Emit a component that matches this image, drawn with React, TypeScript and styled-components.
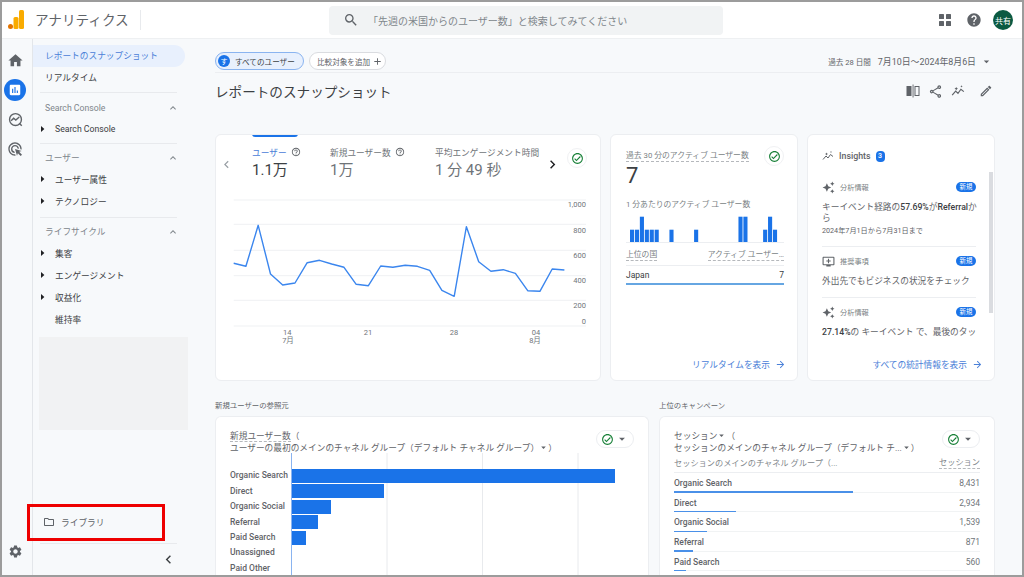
import React from 'react';
import styled, { createGlobalStyle } from 'styled-components';
import {
  MdAdsClick,
  MdArrowDropDown,
  MdArrowForward,
  MdAssessment,
  MdAutoAwesome,
  MdChevronLeft,
  MdChevronRight,
  MdExpandLess,
  MdHelp,
  MdHelpOutline,
  MdHome,
  MdOutlineAddToQueue,
  MdOutlineCheckCircle,
  MdOutlineEdit,
  MdOutlineFolder,
  MdOutlineShare,
  MdAdd,
  MdSearch,
  MdSettings,
} from 'react-icons/md';

const FONT = '"Roboto", "Noto Sans CJK JP", sans-serif';
const BLUE = '#1a73e8';

const GlobalStyle = createGlobalStyle`
  html, body { margin: 0; padding: 0; background: #fff; }
  body { font-family: ${FONT}; color: #3c4043; }
  * { box-sizing: border-box; }
`;

const Frame = styled.div`
  width: 1024px;
  height: 577px;
  border: 2px solid #9c9c9c;
  overflow: hidden;
  position: relative;
  display: flex;
  flex-direction: column;
  background: #f7f9fb;
`;

const Header = styled.header`
  height: 37px;
  flex: none;
  background: #fff;
  display: flex;
  align-items: center;
  border-bottom: 1px solid #eef0f2;
`;

const Logo = styled.svg`
  width: 16px;
  height: 20px;
  margin-left: 6px;
  flex: none;
`;

const ProductName = styled.div`
  margin-left: 11px;
  width: 106px;
  height: 20px;
  line-height: 20px;
  font-size: 13.6px;
  color: #5f6368;
  border-right: 1px solid #e8eaed;
  flex: none;
`;

const SearchBox = styled.div`
  margin-left: 188px;
  width: 394px;
  height: 29px;
  border-radius: 4px;
  background: #f1f3f4;
  display: flex;
  align-items: center;
  padding-left: 14px;
  gap: 9px;
  font-size: 10px;
  color: #80868b;
  flex: none;
`;

const HeaderIcons = styled.div`
  margin-left: auto;
  display: flex;
  align-items: center;
  padding-right: 9px;
  color: #5f6368;
  gap: 11px;
`;

const AppsIcon = styled.svg`
  width: 14px;
  height: 14px;
  margin-right: 3px;
`;

const Avatar = styled.div`
  width: 20px;
  height: 20px;
  border-radius: 50%;
  background: #0b5a42;
  color: #fff;
  font-size: 8px;
  display: flex;
  align-items: center;
  justify-content: center;
`;

const Body = styled.div`
  flex: 1;
  min-height: 0;
  display: flex;
`;

const Rail = styled.nav`
  width: 31px;
  flex: none;
  border-right: 1px solid #e3e6ea;
  display: flex;
  flex-direction: column;
  align-items: center;
  padding: 10px 4px 0 0;
  color: #5f6368;
`;

const RailButton = styled.div<{ $active?: boolean }>`
  width: 22px;
  height: 22px;
  margin-bottom: 7.5px;
  border-radius: 50%;
  flex: none;
  display: flex;
  align-items: center;
  justify-content: center;
  background: ${({ $active }) => ($active ? BLUE : 'transparent')};
  color: ${({ $active }) => ($active ? '#fff' : '#5f6368')};
`;

const RailBottom = styled.div`
  margin-top: auto;
  margin-bottom: 16px;
  color: #5f6368;
  display: flex;
`;

const Sidebar = styled.aside`
  width: 157px;
  flex: none;
  display: flex;
  flex-direction: column;
  padding-top: 6px;
`;

const NavPill = styled.div<{ $active?: boolean }>`
  width: 152px;
  height: 22px;
  line-height: 22px;
  padding-left: 12px;
  border-radius: 0 11px 11px 0;
  font-size: 8.7px;
  flex: none;
  color: ${({ $active }) => ($active ? '#4a80d8' : '#3c4043')};
  background: ${({ $active }) => ($active ? '#e8f0fd' : 'transparent')};
`;

const NavPlain = styled(NavPill)`
  margin: 1px 0 3px;
  height: 21px;
  line-height: 21px;
`;

const NavGroup = styled.div`
  margin: 0 13px 0 7px;
  padding: 3px 0 5px;
  border-top: 1px solid #e8eaed;
  flex: none;
`;

const FirstNavGroup = styled(NavGroup)`
  padding: 4px 0 3px;
`;

const NavGroupTitle = styled.div`
  height: 21px;
  padding-left: 5px;
  display: flex;
  align-items: center;
  justify-content: space-between;
  font-size: 8.7px;
  color: #80868b;
  margin-right: -2px;
`;

const NavItem = styled.div`
  height: 22px;
  display: flex;
  align-items: center;
  font-size: 8.7px;
  color: #3c4043;
`;

const Caret = styled.span<{ $hidden?: boolean }>`
  width: 15px;
  flex: none;
  display: flex;
  margin-left: -1px;
  margin-right: 1px;
  color: #202124;
  visibility: ${({ $hidden }) => ($hidden ? 'hidden' : 'visible')};
`;

const Placeholder = styled.div`
  margin: 2px 2px 0 6px;
  height: 93px;
  background: #f1f2f3;
  flex: none;
`;

const LibraryRow = styled.div`
  margin-top: auto;
  height: 22px;
  padding-left: 10px;
  display: flex;
  align-items: center;
  gap: 6px;
  font-size: 8.7px;
  color: #5f6368;
`;

const CollapseRow = styled.div`
  margin: 10px 13px 0 7px;
  height: 32px;
  border-top: 1px solid #e8eaed;
  display: flex;
  justify-content: flex-end;
  align-items: center;
  color: #3c4043;
`;

const RedBox = styled.div`
  position: absolute;
  left: 25px;
  top: 502px;
  width: 138px;
  height: 37px;
  border: 3px solid #ee0000;
`;

const Main = styled.main`
  flex: 1;
  min-width: 0;
  padding: 0 27px 0 25px;
  overflow: hidden;
`;

const Toolbar = styled.div`
  height: 34px;
  margin-right: -5px;
  padding: 13px 7px 0 0;
  border-bottom: 1px solid #eceef1;
  display: flex;
  align-items: flex-start;
  gap: 5px;
`;

const SegmentChip = styled.div`
  height: 18px;
  width: 89px;
  border-radius: 9px;
  border: 1px solid #8ab4f0;
  background: #e8f0fd;
  display: flex;
  align-items: center;
  padding-left: 2px;
  gap: 5px;
  font-size: 7.6px;
  color: #3c4043;
`;

const ChipBadge = styled.span`
  width: 12px;
  height: 12px;
  border-radius: 50%;
  background: ${BLUE};
  color: #fff;
  font-size: 7px;
  display: flex;
  align-items: center;
  justify-content: center;
`;

const CompareChip = styled.div`
  height: 18px;
  width: 77px;
  border-radius: 9px;
  border: 1px solid #dadce0;
  background: #fff;
  display: flex;
  align-items: center;
  padding-left: 7px;
  gap: 2px;
  font-size: 7.6px;
  color: #5f6368;
`;

const DateRange = styled.div`
  margin-left: auto;
  height: 18px;
  display: flex;
  align-items: center;
  font-size: 8.9px;
  color: #5f6368;
`;

const DateHint = styled.span`
  font-size: 7.6px;
  margin-right: 7px;
`;

const DateCaret = styled.span`
  display: flex;
  margin-left: 4px;
`;

const TitleRow = styled.div`
  height: 36px;
  margin-bottom: 25px;
  display: flex;
  align-items: center;
  justify-content: space-between;
`;

const Title = styled.h1`
  margin: 0;
  font-size: 13.6px;
  font-weight: 400;
  color: #3c4043;
`;

const Actions = styled.div`
  display: flex;
  align-items: center;
  gap: 8px;
  margin-right: 2px;
  color: #5f6368;
`;

const EditAction = styled.span`
  display: flex;
  margin-left: 6px;
`;

const TopCards = styled.div`
  display: flex;
  gap: 9px;
  height: 247px;
`;

const Card = styled.section<{ $width: number }>`
  width: ${({ $width }) => $width}px;
  flex: none;
  background: #fff;
  border: 1px solid #eceef1;
  border-radius: 6px;
  display: flex;
  flex-direction: column;
  position: relative;
  overflow: hidden;
`;

const MetricHead = styled.div`
  height: 60px;
  flex: none;
  display: flex;
  align-items: center;
  margin-top: -1px;
`;

const SideChevron = styled.span<{ $dark?: boolean }>`
  width: 20px;
  flex: none;
  display: flex;
  justify-content: center;
  color: ${({ $dark }) => ($dark ? '#202124' : '#9aa0a6')};
`;

const MetricTab = styled.div<{ $width: number; $active?: boolean }>`
  width: ${({ $width }) => $width}px;
  flex: none;
  align-self: stretch;
  padding-top: 12px;
  position: relative;
  margin-left: ${({ $active }) => ($active ? '16px' : '0')};
  &::before {
    content: '';
    display: ${({ $active }) => ($active ? 'block' : 'none')};
    position: absolute;
    left: 0;
    top: 0;
    width: 46px;
    height: 3px;
    border-radius: 0 0 3px 3px;
    background: ${BLUE};
  }
`;

const MetricLabel = styled.div<{ $active?: boolean }>`
  height: 12px;
  display: flex;
  align-items: center;
  gap: 4px;
  font-size: 8.7px;
  white-space: nowrap;
  color: ${({ $active }) => ($active ? '#4a80d8' : '#6f7478')};
`;

const MetricValue = styled.div`
  margin-top: 1px;
  line-height: 22px;
  font-size: 15px;
  color: #3c4043;
`;

const MutedValue = styled(MetricValue)`
  color: #6f7478;
`;

const CheckDot = styled.span`
  width: 20px;
  height: 20px;
  flex: none;
  border-radius: 50%;
  background: #fff;
  border: 1px solid #f0f1f3;
  display: flex;
  align-items: center;
  justify-content: center;
  color: #188038;
`;

const CheckSlot = styled.div`
  align-self: flex-start;
  margin: 14px 0 0 5px;
`;

const LineChart = styled.svg`
  display: block;
  width: 385px;
  height: 160px;
  font-family: ${FONT};
`;

const RealtimeBody = styled.div`
  flex: 1;
  padding: 15px 13px 0 15px;
`;

const DashedRow = styled.div`
  height: 12px;
  display: flex;
  justify-content: space-between;
  align-items: center;
`;

const Dashed = styled.span`
  font-size: 7.8px;
  line-height: 11px;
  color: #7a7f84;
  border-bottom: 1px dashed #b5b8bc;
  white-space: nowrap;
`;

const BigNumber = styled.div`
  margin-top: 2px;
  line-height: 24px;
  font-size: 22px;
  color: #3c4043;
`;

const SubLabel = styled.div`
  margin-top: 11px;
  line-height: 12px;
  font-size: 7.8px;
  color: #7a7f84;
  white-space: nowrap;
`;

const MiniBars = styled.svg`
  display: block;
  margin-top: 1px;
  width: 158px;
  height: 32px;
`;

const CountryHead = styled(DashedRow)`
  margin-top: 5px;
`;

const CountryRow = styled.div`
  margin-top: 4px;
  padding-top: 3px;
  border-top: 1px solid #eceef1;
  height: 15px;
  display: flex;
  justify-content: space-between;
  align-items: center;
  font-size: 8.5px;
  color: #3c4043;
`;

const CountryBar = styled.div`
  margin-top: 3px;
  height: 1.5px;
  background: #66a6e2;
`;

const CardFooter = styled.div`
  height: 32px;
  flex: none;
  padding-right: 11px;
  display: flex;
  justify-content: flex-end;
  align-items: center;
  gap: 5px;
  font-size: 8.7px;
  color: #4a80d8;
`;

const InsightsHead = styled.div`
  height: 12px;
  margin: 15px 0 0 14px;
  display: flex;
  align-items: center;
  font-size: 8.8px;
  font-weight: 500;
  color: #5f6368;
`;

const InsightsIcon = styled.span`
  display: flex;
  margin-right: 5px;
`;

const CountBadge = styled.span`
  margin-left: 5px;
  width: 9px;
  height: 11px;
  border-radius: 4px;
  background: ${BLUE};
  color: #fff;
  font-size: 7px;
  display: flex;
  align-items: center;
  justify-content: center;
`;

const InsightList = styled.div`
  flex: 1;
  min-height: 0;
  overflow: hidden;
  padding: 11px 15px 0 14px;
`;

const InsightItem = styled.div`
  padding: 7px 0 10px;
  border-bottom: 1px solid #eceef1;
  margin-right: 3px;
  &:last-child {
    border-bottom: 0;
  }
`;

const InsightTop = styled.div`
  height: 14px;
  display: flex;
  align-items: center;
  gap: 5px;
  font-size: 7.2px;
  color: #7a7f84;
`;

const NewBadge = styled.span`
  margin-left: auto;
  width: 20px;
  height: 10px;
  border-radius: 5px;
  background: ${BLUE};
  color: #fff;
  font-size: 6.4px;
  line-height: 10px;
  text-align: center;
`;

const InsightText = styled.div`
  margin-top: 8px;
  margin-right: -3px;
  font-size: 8.7px;
  line-height: 11px;
  color: #5f6368;
  b {
    font-weight: 500;
    color: #3c4043;
  }
`;

const InsightDate = styled.div`
  margin-top: 1px;
  font-size: 7.2px;
  line-height: 11px;
  color: #5f6368;
`;

const ScrollThumb = styled.div`
  position: absolute;
  right: 1px;
  top: 37px;
  width: 4px;
  height: 141px;
  background: #dadce0;
`;

const BottomCards = styled.div`
  margin-top: 20px;
  display: flex;
  gap: 10px;
`;

const BottomColumn = styled.div<{ $width: number }>`
  width: ${({ $width }) => $width}px;
  flex: none;
`;

const SectionLabel = styled.div`
  height: 10px;
  line-height: 10px;
  margin-bottom: 5px;
  font-size: 7.4px;
  color: #5f6368;
`;

const ChartCard = styled(Card)`
  height: 200px;
  padding: 13px 14px 0 14px;
  border-bottom: 0;
  border-radius: 6px 6px 0 0;
`;

const ChartHead = styled.div`
  display: flex;
  justify-content: space-between;
  align-items: flex-start;
  flex: none;
`;

const ChartTitle = styled.div`
  font-size: 8.7px;
  line-height: 12px;
  color: #5f6368;
  white-space: nowrap;
`;

const TitleDashed = styled.span`
  border-bottom: 1px dashed #b5b8bc;
`;

const TitleCaret = styled.span`
  display: inline-flex;
  vertical-align: middle;
  margin: -2px -1px 0;
`;

const FilterPill = styled.div`
  width: 38px;
  height: 18px;
  border-radius: 9px;
  border: 1px solid #eceef1;
  background: #fff;
  display: flex;
  align-items: center;
  padding-left: 4px;
  gap: 1px;
  color: #5f6368;
  flex: none;
`;

const PillCheck = styled.span`
  display: flex;
  color: #188038;
`;

const BarChart = styled.div`
  margin-top: -1px;
  display: grid;
  grid-template-columns: 61px 1fr;
  grid-auto-rows: 15.4px;
`;

const BarLabel = styled.div`
  font-size: 8.5px;
  font-weight: 500;
  line-height: 15.4px;
  color: #5f6368;
  white-space: nowrap;
`;

const BarTrack = styled.div`
  display: flex;
  align-items: center;
  border-left: 1px solid #8ab4f0;
  background-image: linear-gradient(to right, transparent 94.5px, #e8eaed 94.5px, #e8eaed 95.5px);
  background-size: 95.5px 100%;
  margin-right: 20px;
`;

const Bar = styled.div<{ $width: number }>`
  height: 14px;
  width: ${({ $width }) => $width}px;
  background: ${BLUE};
`;

const TableHead = styled.div`
  margin-top: 3px;
  padding-bottom: 3px;
  border-bottom: 1px solid #eceef1;
  display: flex;
  justify-content: space-between;
  align-items: center;
  font-size: 8.2px;
  color: #80868b;
  line-height: 11px;
  flex: none;
`;

const TableRow = styled.div`
  height: 19.7px;
  flex: none;
  position: relative;
  display: flex;
  justify-content: space-between;
  padding-top: 4px;
  line-height: 12px;
  font-size: 8.5px;
  color: #5f6368;
  font-weight: 500;
  border-bottom: 1px solid #f1f3f4;
`;

const TableValue = styled.span`
  font-weight: 400;
  color: #70757a;
`;

const RowBar = styled.div<{ $width: number }>`
  position: absolute;
  left: 0;
  bottom: -1px;
  height: 1.5px;
  width: ${({ $width }) => $width}px;
  background: #4a90e8;
`;

const linePoints = [
  69.3, 72.3, 31.3, 80, 91, 89, 68.7, 66.3, 70, 73.3, 90.3, 91.7, 72, 73.3, 71.3, 72.3, 76.3, 96.3, 102.3, 32.7, 67.7,
  77.3, 75.7, 79.3, 96.7, 97.3, 75, 76,
]
  .map((y, i) => `${(17.7 + i * 12.25).toFixed(1)},${y}`)
  .join(' ');

const gridLines = [6, 30.3, 56.3, 81.7, 106.3, 132];
const yLabels: [string, number][] = [
  ['1,000', 10],
  ['800', 35.7],
  ['600', 60.7],
  ['400', 86],
  ['200', 111],
  ['0', 127.3],
];
const xLabels: [string, number, number][] = [
  ['14', 71.3, 138],
  ['7月', 72, 146],
  ['21', 152, 138],
  ['28', 238, 138],
  ['04', 320, 138],
  ['8月', 319, 146],
];

const miniBars: [number, boolean][] = [
  [0, false],
  [1, false],
  [2, true],
  [3, false],
  [4, false],
  [5, false],
  [8, false],
  [13, false],
  [22, true],
  [23, true],
  [27, false],
  [28, true],
  [29, false],
];

const channelBars: [string, number][] = [
  ['Organic Search', 323],
  ['Direct', 92],
  ['Organic Social', 39],
  ['Referral', 26],
  ['Paid Search', 14],
  ['Unassigned', 0],
  ['Paid Other', 0],
];

const sessionRows: [string, string, number][] = [
  ['Organic Search', '8,431', 179],
  ['Direct', '2,934', 62],
  ['Organic Social', '1,539', 33],
  ['Referral', '871', 19],
  ['Paid Search', '560', 12],
];

const SparkLine = ({ size = 14 }: { size?: number }) => (
  <svg width={size} height={size} viewBox="0 0 24 24" fill="none" stroke="currentColor" strokeWidth="2">
    <path d="M2 19l6-7 4 4 5-7 5 4" />
    <path d="M9 5l1 2 2 1-2 1-1 2-1-2-2-1 2-1zM18 2l.7 1.3L20 4l-1.3.7L18 6l-.7-1.3L16 4l1.3-.7z" fill="currentColor" stroke="none" />
  </svg>
);

const CheckButton = () => (
  <CheckDot>
    <MdOutlineCheckCircle size={13} />
  </CheckDot>
);

const CheckPill = () => (
  <FilterPill>
    <PillCheck>
      <MdOutlineCheckCircle size={13} />
    </PillCheck>
    <MdArrowDropDown size={14} />
  </FilterPill>
);

const NavRow = ({ label, leaf }: { label: string; leaf?: boolean }) => (
  <NavItem>
    <Caret $hidden={leaf}>
      <svg width="8" height="8" viewBox="0 0 8 8">
        <path d="M2 1l3.4 3L2 7z" fill="currentColor" />
      </svg>
    </Caret>
    {label}
  </NavItem>
);

export default function App() {
  return (
    <>
      <GlobalStyle />
      <Frame>
        <Header>
          <Logo viewBox="0 0 16 20">
            <rect x="11" y="0" width="5" height="19" rx="1.5" fill="#f9ab00" />
            <rect x="5.5" y="7" width="5" height="12" rx="1.5" fill="#f9ab00" />
            <circle cx="2.5" cy="16.5" r="2.5" fill="#e37400" />
          </Logo>
          <ProductName>アナリティクス</ProductName>
          <SearchBox>
            <MdSearch size={16} color="#5f6368" />
            「先週の米国からのユーザー数」と検索してみてください
          </SearchBox>
          <HeaderIcons>
            <AppsIcon viewBox="0 0 14 14" fill="currentColor">
              <rect x="1" y="1" width="5" height="5" rx="0.6" />
              <rect x="8" y="1" width="5" height="5" rx="0.6" />
              <rect x="1" y="8" width="5" height="5" rx="0.6" />
              <rect x="8" y="8" width="5" height="5" rx="0.6" />
            </AppsIcon>
            <MdHelp size={16} />
            <Avatar>共有</Avatar>
          </HeaderIcons>
        </Header>
        <Body>
          <Rail>
            <RailButton>
              <MdHome size={17} />
            </RailButton>
            <RailButton $active>
              <MdAssessment size={14} />
            </RailButton>
            <RailButton>
              <svg width="15" height="15" viewBox="0 0 24 24" fill="none" stroke="currentColor" strokeWidth="2.2">
                <circle cx="12" cy="12" r="9.5" />
                <path d="M5 14l4-4 3.5 3L18 8" />
                <path d="M18 18l4 4" />
              </svg>
            </RailButton>
            <RailButton>
              <MdAdsClick size={16} />
            </RailButton>
            <RailBottom>
              <MdSettings size={15} />
            </RailBottom>
          </Rail>
          <Sidebar>
            <NavPill $active>レポートのスナップショット</NavPill>
            <NavPlain>リアルタイム</NavPlain>
            <FirstNavGroup>
              <NavGroupTitle>
                Search Console
                <MdExpandLess size={12} />
              </NavGroupTitle>
              <NavRow label="Search Console" />
            </FirstNavGroup>
            <NavGroup>
              <NavGroupTitle>
                ユーザー
                <MdExpandLess size={12} />
              </NavGroupTitle>
              <NavRow label="ユーザー属性" />
              <NavRow label="テクノロジー" />
            </NavGroup>
            <NavGroup>
              <NavGroupTitle>
                ライフサイクル
                <MdExpandLess size={12} />
              </NavGroupTitle>
              <NavRow label="集客" />
              <NavRow label="エンゲージメント" />
              <NavRow label="収益化" />
              <NavRow label="維持率" leaf />
            </NavGroup>
            <Placeholder />
            <LibraryRow>
              <MdOutlineFolder size={12} />
              ライブラリ
            </LibraryRow>
            <CollapseRow>
              <MdChevronLeft size={17} />
            </CollapseRow>
          </Sidebar>
          <Main>
            <Toolbar>
              <SegmentChip>
                <ChipBadge>す</ChipBadge>
                すべてのユーザー
              </SegmentChip>
              <CompareChip>
                比較対象を追加
                <MdAdd size={11} />
              </CompareChip>
              <DateRange>
                <DateHint>過去 28 日間</DateHint>
                7月10日～2024年8月6日
                <DateCaret>
                  <MdArrowDropDown size={13} />
                </DateCaret>
              </DateRange>
            </Toolbar>
            <TitleRow>
              <Title>レポートのスナップショット</Title>
              <Actions>
                <svg width="14" height="14" viewBox="0 0 14 14" fill="currentColor">
                  <rect x="0.5" y="2" width="5" height="10" />
                  <rect x="6.6" y="0.5" width="0.9" height="13" />
                  <rect x="9" y="2.5" width="4" height="9" fill="none" stroke="currentColor" />
                </svg>
                <MdOutlineShare size={15} />
                <SparkLine />
                <EditAction>
                  <MdOutlineEdit size={14} />
                </EditAction>
              </Actions>
            </TitleRow>
            <TopCards>
              <Card $width={386}>
                <MetricHead>
                  <SideChevron>
                    <MdChevronLeft size={15} />
                  </SideChevron>
                  <MetricTab $width={78} $active>
                    <MetricLabel $active>
                      ユーザー
                      <MdHelpOutline size={10} color="#5f6368" />
                    </MetricLabel>
                    <MetricValue>1.1万</MetricValue>
                  </MetricTab>
                  <MetricTab $width={105}>
                    <MetricLabel>
                      新規ユーザー数
                      <MdHelpOutline size={10} color="#5f6368" />
                    </MetricLabel>
                    <MutedValue>1万</MutedValue>
                  </MetricTab>
                  <MetricTab $width={107}>
                    <MetricLabel>平均エンゲージメント時間</MetricLabel>
                    <MutedValue>1 分 49 秒</MutedValue>
                  </MetricTab>
                  <SideChevron $dark>
                    <MdChevronRight size={17} />
                  </SideChevron>
                  <CheckSlot>
                    <CheckButton />
                  </CheckSlot>
                </MetricHead>
                <LineChart viewBox="0 0 385 160">
                  {gridLines.map((y) => (
                    <line key={y} x1="17.7" x2="370" y1={y} y2={y} stroke="#eff1f3" />
                  ))}
                  <polyline points={linePoints} fill="none" stroke="#3b86ee" strokeWidth="1.4" strokeLinejoin="round" />
                  {yLabels.map(([label, y]) => (
                    <text key={label} x="370" y={y + 3} textAnchor="end" fontSize="7.5" fill="#70757a">
                      {label}
                    </text>
                  ))}
                  {xLabels.map(([label, x, y]) => (
                    <text key={label} x={x} y={y + 3} textAnchor="middle" fontSize="7.5" fill="#70757a">
                      {label}
                    </text>
                  ))}
                </LineChart>
              </Card>
              <Card $width={188}>
                <RealtimeBody>
                  <DashedRow>
                    <Dashed>過去 30 分のアクティブ ユーザー数</Dashed>
                    <CheckButton />
                  </DashedRow>
                  <BigNumber>7</BigNumber>
                  <SubLabel>1 分あたりのアクティブ ユーザー数</SubLabel>
                  <MiniBars viewBox="0 0 158 32">
                    <line x1="0" x2="158" y1="30.5" y2="30.5" stroke="#eceef1" />
                    {miniBars.map(([i, tall]) => (
                      <rect
                        key={i}
                        x={4 + i * 4.93}
                        y={tall ? 4.7 : 17.7}
                        width="4.1"
                        height={tall ? 25.3 : 12.3}
                        fill={BLUE}
                      />
                    ))}
                  </MiniBars>
                  <CountryHead>
                    <Dashed>上位の国</Dashed>
                    <Dashed>アクティブ ユーザー…</Dashed>
                  </CountryHead>
                  <CountryRow>
                    <span>Japan</span>
                    <span>7</span>
                  </CountryRow>
                  <CountryBar />
                </RealtimeBody>
                <CardFooter>
                  リアルタイムを表示
                  <MdArrowForward size={11} />
                </CardFooter>
              </Card>
              <Card $width={188}>
                <InsightsHead>
                  <InsightsIcon>
                    <SparkLine size={12} />
                  </InsightsIcon>
                  Insights
                  <CountBadge>3</CountBadge>
                </InsightsHead>
                <InsightList>
                  <InsightItem>
                    <InsightTop>
                      <MdAutoAwesome size={13} color="#5f6368" />
                      分析情報
                      <NewBadge>新規</NewBadge>
                    </InsightTop>
                    <InsightText>
                      キーイベント経路の<b>57.69%</b>が<b>Referral</b>から
                    </InsightText>
                    <InsightDate>2024年7月1日から7月31日まで</InsightDate>
                  </InsightItem>
                  <InsightItem>
                    <InsightTop>
                      <MdOutlineAddToQueue size={13} color="#5f6368" />
                      推奨事項
                      <NewBadge>新規</NewBadge>
                    </InsightTop>
                    <InsightText>外出先でもビジネスの状況をチェック</InsightText>
                  </InsightItem>
                  <InsightItem>
                    <InsightTop>
                      <MdAutoAwesome size={13} color="#5f6368" />
                      分析情報
                      <NewBadge>新規</NewBadge>
                    </InsightTop>
                    <InsightText>
                      <b>27.14%</b>の キーイベント で、最後のタッ
                    </InsightText>
                  </InsightItem>
                </InsightList>
                <ScrollThumb />
                <CardFooter>
                  すべての統計情報を表示
                  <MdArrowForward size={11} />
                </CardFooter>
              </Card>
            </TopCards>
            <BottomCards>
              <BottomColumn $width={434}>
                <SectionLabel>新規ユーザーの参照元</SectionLabel>
                <ChartCard $width={434}>
                  <ChartHead>
                    <ChartTitle>
                      <TitleDashed>新規ユーザー数</TitleDashed>（
                      <br />
                      ユーザーの最初のメインのチャネル グループ（デフォルト チャネル グループ）
                      <TitleCaret>
                        <MdArrowDropDown size={11} />
                      </TitleCaret>
                      ）
                    </ChartTitle>
                    <CheckPill />
                  </ChartHead>
                  <BarChart>
                    <BarLabel />
                    <BarTrack />
                    {channelBars.map(([label, width]) => (
                      <React.Fragment key={label}>
                        <BarLabel>{label}</BarLabel>
                        <BarTrack>
                          <Bar $width={width} />
                        </BarTrack>
                      </React.Fragment>
                    ))}
                  </BarChart>
                </ChartCard>
              </BottomColumn>
              <BottomColumn $width={336}>
                <SectionLabel>上位のキャンペーン</SectionLabel>
                <ChartCard $width={336}>
                  <ChartHead>
                    <ChartTitle>
                      セッション
                      <TitleCaret>
                        <MdArrowDropDown size={11} />
                      </TitleCaret>
                      （
                      <br />
                      セッションのメインのチャネル グループ（デフォルト チ...
                      <TitleCaret>
                        <MdArrowDropDown size={11} />
                      </TitleCaret>
                      ）
                    </ChartTitle>
                    <CheckPill />
                  </ChartHead>
                  <TableHead>
                    <span>セッションのメインのチャネル グループ（...</span>
                    <TitleDashed>セッション</TitleDashed>
                  </TableHead>
                  {sessionRows.map(([label, value, width]) => (
                    <TableRow key={label}>
                      <span>{label}</span>
                      <TableValue>{value}</TableValue>
                      <RowBar $width={width} />
                    </TableRow>
                  ))}
                </ChartCard>
              </BottomColumn>
            </BottomCards>
          </Main>
        </Body>
        <RedBox />
      </Frame>
    </>
  );
}
